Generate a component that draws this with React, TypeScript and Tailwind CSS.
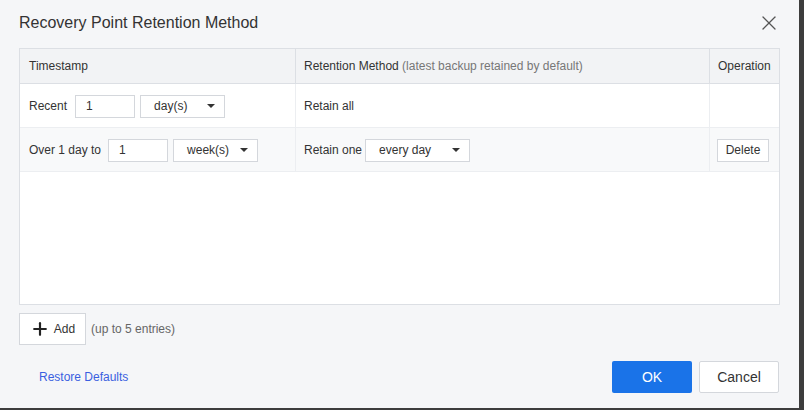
import { X, Plus } from "lucide-react"

function Caret() {
  return (
    <svg width="8" height="4" viewBox="0 0 8 4" className="ml-auto">
      <path d="M0 0 L8 0 L4 4 Z" fill="#333" />
    </svg>
  )
}

function Select({ value, width }: { value: string; width: string }) {
  return (
    <div className={`flex h-[23px] items-center border border-[#d4d7dc] bg-white pl-[13px] pr-[9px] text-[#333] ${width}`}>
      <span>{value}</span>
      <Caret />
    </div>
  )
}

function NumInput({ value }: { value: string }) {
  return (
    <div className="flex h-[23px] w-[60px] items-center border border-[#d4d7dc] bg-white pl-[10px] text-[#333]">
      {value}
    </div>
  )
}

export default function App() {
  return (
    <div className="flex h-[410px] w-[804px] bg-[#3d3d3d] font-['Liberation_Sans',Arial,sans-serif] text-[12px]">
      <div className="flex h-[408px] w-[799px] flex-col bg-[#f5f6f8] px-[19px]">
        {/* Header */}
        <div className="flex h-[48px] items-center pb-[3px]">
          <h1 className="text-[16px] text-[#333]">Recovery Point Retention Method</h1>
          <X className="ml-auto mr-[-1px] h-6 w-6 text-[#555]" strokeWidth={1.3} />
        </div>

        {/* Table */}
        <div className="flex h-[257px] flex-col border border-[#dcdfe4] bg-white">
          <div className="flex h-[35px] border-b border-[#dcdfe4] bg-[#f2f3f5] text-[#333]">
            <div className="flex w-[276px] items-center border-r border-[#dcdfe4] pl-[9px]">Timestamp</div>
            <div className="flex w-[414px] items-center border-r border-[#dcdfe4] pl-[8px]">
              Retention Method&nbsp;<span className="text-[#777]">(latest backup retained by default)</span>
            </div>
            <div className="flex flex-1 items-center pl-[8px]">Operation</div>
          </div>

          <div className="flex h-[44px] border-b border-[#eceef1] text-[#333]">
            <div className="flex w-[276px] items-center gap-[5px] border-r border-[#eceef1] pl-[9px] pt-[1px]">
              <span className="mr-[3px]">Recent</span>
              <NumInput value="1" />
              <Select value="day(s)" width="w-[85px]" />
            </div>
            <div className="flex w-[414px] items-center border-r border-[#eceef1] pl-[8px]">Retain all</div>
            <div className="flex-1" />
          </div>

          <div className="flex h-[44px] border-b border-[#eceef1] bg-[#f8f9fa] text-[#333]">
            <div className="flex w-[276px] items-center gap-[5px] border-r border-[#eceef1] pl-[9px] pt-[1px]">
              <span className="mr-[2px]">Over 1 day to</span>
              <NumInput value="1" />
              <Select value="week(s)" width="w-[85px]" />
            </div>
            <div className="flex w-[414px] items-center gap-[3px] border-r border-[#eceef1] pl-[8px] pt-[1px]">
              <span>Retain one</span>
              <Select value="every day" width="w-[105px]" />
            </div>
            <div className="flex flex-1 items-center pl-[7px] pt-[1px]">
              <button className="h-[23px] w-[52px] border border-[#d4d7dc] bg-white text-[#333]">Delete</button>
            </div>
          </div>
          <div className="flex-1" />
        </div>

        {/* Add */}
        <div className="mt-[8px] flex items-center gap-[5px]">
          <button className="flex h-[32px] w-[67px] items-center justify-center gap-[4px] border border-[#d4d7dc] bg-white text-[#333]">
            <Plus className="h-[20px] w-[20px] text-[#222]" strokeWidth={2.6} />
            Add
          </button>
          <span className="text-[#666]">(up to 5 entries)</span>
        </div>

        {/* Footer */}
        <div className="mt-[16px] flex items-center">
          <a className="ml-[20px] text-[#3a5fe0]">Restore Defaults</a>
          <button className="ml-auto h-[32px] w-[80px] rounded-[2px] bg-[#1a73e8] text-[14px] text-white">OK</button>
          <button className="ml-[7px] mr-[1px] h-[32px] w-[80px] rounded-[2px] border border-[#d4d7dc] bg-white text-[14px] text-[#333]">
            Cancel
          </button>
        </div>
      </div>
    </div>
  )
}
